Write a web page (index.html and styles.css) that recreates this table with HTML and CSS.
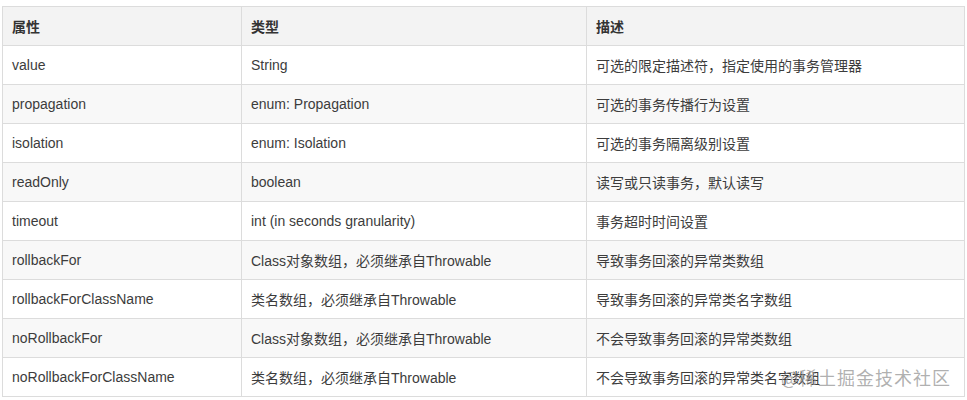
FILE: index.html
```html
<!DOCTYPE html>
<html lang="zh">
<head>
<meta charset="utf-8">
<link rel="stylesheet" href="styles.css">
</head>
<body>
<div class="wrap">
<table class="props">
<colgroup><col class="c1"><col class="c2"><col class="c3"></colgroup>
<thead>
<tr><th>属性</th><th>类型</th><th>描述</th></tr>
</thead>
<tbody>
<tr><td>value</td><td>String</td><td>可选的限定描述符，指定使用的事务管理器</td></tr>
<tr><td>propagation</td><td>enum: Propagation</td><td>可选的事务传播行为设置</td></tr>
<tr><td>isolation</td><td>enum: Isolation</td><td>可选的事务隔离级别设置</td></tr>
<tr><td>readOnly</td><td>boolean</td><td>读写或只读事务，默认读写</td></tr>
<tr><td>timeout</td><td>int (in seconds granularity)</td><td>事务超时时间设置</td></tr>
<tr><td>rollbackFor</td><td>Class对象数组，必须继承自Throwable</td><td>导致事务回滚的异常类数组</td></tr>
<tr><td>rollbackForClassName</td><td>类名数组，必须继承自Throwable</td><td>导致事务回滚的异常类名字数组</td></tr>
<tr><td>noRollbackFor</td><td>Class对象数组，必须继承自Throwable</td><td>不会导致事务回滚的异常类数组</td></tr>
<tr><td>noRollbackForClassName</td><td>类名数组，必须继承自Throwable</td><td>不会导致事务回滚的异常类名字数组</td></tr>
</tbody>
</table>
<div class="watermark">@稀土掘金技术社区</div>
</div>
</body>
</html>
```
FILE: styles.css
```css
html, body {
  margin: 0;
  padding: 0;
  background: #fff;
}
.wrap {
  position: relative;
  padding: 6px 0 0 2px;
  width: 962px;
  font-family: "Liberation Sans", Arial, "Noto Sans CJK SC", sans-serif;
}
.props {
  border-collapse: collapse;
  table-layout: fixed;
  width: 962px;
  font-size: 14px;
  color: #3c3c3c;
}
.c1 { width: 239px; }
.c2 { width: 345px; }
.c3 { width: 378px; }
.props th, .props td {
  border: 1px solid #dcdcdc;
  height: 39px;
  padding: 0 9px;
  text-align: left;
  white-space: nowrap;
  box-sizing: border-box;
}
.props th {
  background: #f3f3f3;
  font-weight: bold;
  color: #333;
}
.props tbody tr:nth-child(even) td {
  background: #f8f8f8;
}
.watermark {
  position: absolute;
  right: 13px;
  bottom: 7px;
  font-size: 18px;
  color: rgba(150, 150, 150, 0.75);
  font-family: "Noto Sans CJK SC", sans-serif;
  letter-spacing: 1px;
}
```
